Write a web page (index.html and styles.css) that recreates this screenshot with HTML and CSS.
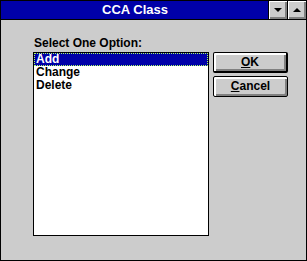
FILE: index.html
```html
<!DOCTYPE html>
<html>
<head>
<meta charset="utf-8">
<link rel="stylesheet" href="styles.css">
</head>
<body>
<div class="window">
  <div class="titlebar">
    <div class="title">CCA Class</div>
    <div class="tbtn"><span class="tri down"></span></div>
    <div class="tbtn"><span class="tri up"></span></div>
  </div>
  <div class="content">
    <div class="left">
      <div class="label">Select One Option:</div>
      <div class="listbox">
        <div class="item selected">Add</div>
        <div class="item">Change</div>
        <div class="item">Delete</div>
      </div>
    </div>
    <div class="right">
      <button class="btn default"><span class="u">O</span>K</button>
      <button class="btn"><span class="u">C</span>ancel</button>
    </div>
  </div>
</div>
</body>
</html>
```
FILE: styles.css
```css
* { box-sizing: border-box; }
html, body { margin: 0; padding: 0; background: #cccccc; }
body { font-family: "Liberation Sans", Arial, sans-serif; font-weight: bold; }
.window {
  width: 307px;
  height: 261px;
  border: 1px solid #000;
  background: #cccccc;
  display: flex;
  flex-direction: column;
}
.titlebar {
  height: 19px;
  border-bottom: 1px solid #000;
  display: flex;
  background: #0000a8;
}
.title {
  flex: 1;
  color: #fff;
  font-size: 13px;
  line-height: 18px;
  text-align: center;
  padding-left: 1px;
}
.tbtn {
  width: 19px;
  height: 18px;
  border-left: 1px solid #000;
  background: #cccccc;
  box-shadow: inset 1px 1px 0 #fff, inset -1px -1px 0 #808080, inset -2px -2px 0 #808080;
  display: flex;
  align-items: center;
  justify-content: center;
}
.tri { width: 0; height: 0; border-left: 4px solid transparent; border-right: 4px solid transparent; margin-right: 1px; }
.tri.down { border-top: 4px solid #000; }
.tri.up { border-bottom: 4px solid #000; }
.content {
  flex: 1;
  display: flex;
  gap: 4px;
  padding: 16px 0 0 32px;
}
.left { display: flex; flex-direction: column; }
.label {
  font-size: 12px;
  line-height: 14px;
  height: 14px;
  padding-left: 1px;
  color: #000;
  margin-bottom: 2px;
}
.listbox {
  width: 176px;
  height: 184px;
  border: 1px solid #000;
  background: #fff;
}
.item {
  font-size: 12px;
  line-height: 13px;
  height: 13px;
  padding-left: 2px;
  color: #000;
}
.item.selected {
  background: #0000a8;
  color: #fff;
  outline: 1px dotted #b0ff60;
  outline-offset: -1px;
}
.right {
  display: flex;
  flex-direction: column;
  gap: 3px;
  padding-top: 16px;
}
.btn {
  width: 75px;
  height: 21px;
  padding: 0 0 1px 0;
  border: 1px solid #000;
  border-radius: 2px;
  background: #cccccc;
  box-shadow: inset 1px 1px 0 #fff, inset 2px 2px 0 #fff, inset -1px -1px 0 #808080, inset -2px -2px 0 #808080;
  font-family: "Liberation Sans", Arial, sans-serif;
  font-weight: bold;
  font-size: 12px;
  color: #000;
  line-height: 18px;
}
.btn.default { border-right-width: 2px; border-bottom-width: 2px; }
.u { text-decoration: underline; }
```
